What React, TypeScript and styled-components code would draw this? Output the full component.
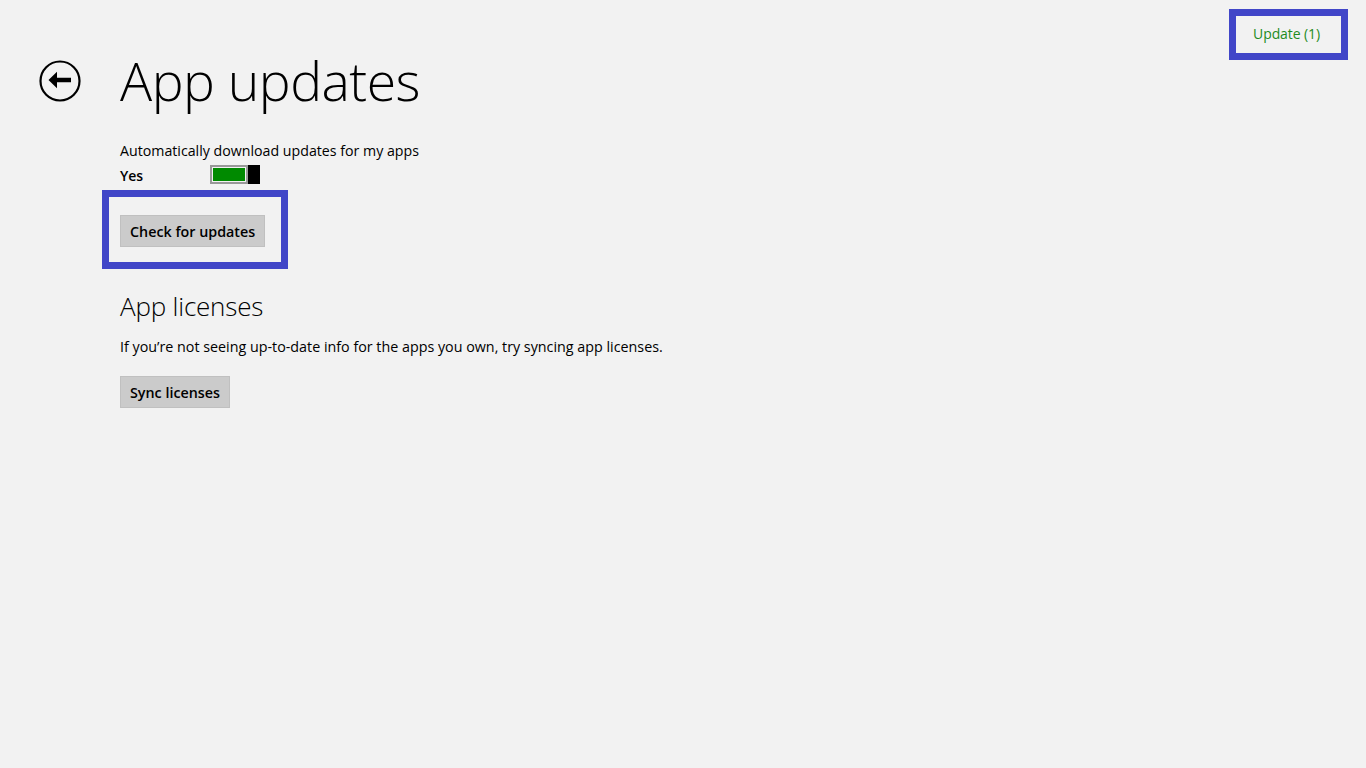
import React, { useState } from 'react';
import styled, { createGlobalStyle } from 'styled-components';

const GlobalStyle = createGlobalStyle`
  html, body {
    margin: 0;
    padding: 0;
    background: #f2f2f2;
  }
  body {
    font-family: 'Open Sans', 'Noto Sans', sans-serif;
    color: #000;
  }
`;

const Page = styled.div`
  position: relative;
  width: 1366px;
  height: 768px;
  background: #f2f2f2;
  overflow: hidden;
`;

const Header = styled.header`
  display: flex;
  align-items: center;
  padding: 47px 0 0 38px;
  height: 67px;
`;

const BackButton = styled.button`
  width: 44px;
  height: 44px;
  padding: 0;
  margin: 0;
  border: none;
  background: transparent;
  display: flex;
  align-items: center;
  justify-content: center;
  cursor: pointer;
`;

const Title = styled.h1`
  margin: 0 0 0 38px;
  font-size: 53.5px;
  font-weight: 300;
  letter-spacing: -0.5px;
  line-height: 67px;
`;

const Content = styled.main`
  padding: 27px 0 0 120px;
  display: flex;
  flex-direction: column;
  align-items: flex-start;
`;

const Label = styled.div`
  font-size: 14.2px;
  line-height: 20px;
`;

const ToggleRow = styled.div`
  display: flex;
  align-items: center;
  height: 28px;
`;

const ToggleState = styled.div`
  width: 90px;
  font-size: 14px;
  font-weight: 600;
`;

const ToggleTrack = styled.button<{ on: boolean }>`
  display: flex;
  width: 50px;
  height: 19px;
  margin-top: -2px;
  padding: 0;
  border: none;
  background: transparent;
  cursor: pointer;
`;

const ToggleFill = styled.span<{ on: boolean }>`
  flex: 1;
  border: 2px solid #999;
  box-shadow: inset 0 0 0 1px #f2f2f2;
  background: ${(p) => (p.on ? '#008a00' : '#f2f2f2')};
`;

const ToggleThumb = styled.span`
  width: 12px;
  background: #000;
`;

const Highlight = styled.div<{ pad: string }>`
  border: 7px solid #4146c8;
  padding: ${(p) => p.pad};
  box-sizing: border-box;
`;

const CheckBox = styled(Highlight)`
  margin: 1px 0 0 -18px;
`;

const Button = styled.button`
  font-family: 'Open Sans', 'Noto Sans', sans-serif;
  font-size: 14.3px;
  font-weight: 600;
  color: #000;
  background: #cbcbcb;
  border: 1px solid #c0c0c0;
  height: 32px;
  padding: 0 9px;
  cursor: pointer;
`;

const SectionTitle = styled.h2`
  margin: 20px 0 0;
  font-size: 26px;
  font-weight: 300;
  line-height: 34px;
  letter-spacing: -0.2px;
`;

const Paragraph = styled.p`
  margin: 14px 0 0;
  font-size: 14.3px;
  line-height: 20px;
`;

const SyncButton = styled(Button)`
  margin-top: 19px;
`;

const TopRight = styled(Highlight)`
  position: absolute;
  top: 9px;
  right: 18px;
  width: 119px;
  height: 51px;
  display: flex;
  align-items: center;
  justify-content: center;
`;

const UpdateLink = styled.button`
  font-family: 'Open Sans', 'Noto Sans', sans-serif;
  font-size: 14px;
  color: #1e8c1e;
  background: transparent;
  border: none;
  padding: 0 4px 2px 0;
  letter-spacing: -0.1px;
  cursor: pointer;
`;

const BackIcon = () => (
  <svg width="44" height="44" viewBox="0 0 44 44">
    <circle cx="22" cy="22" r="19.5" fill="none" stroke="#000" strokeWidth="2.2" />
    <path d="M10.5 21 L19 12.8 L19 18.7 L33 18.7 L33 23.3 L19 23.3 L19 29.2 Z" fill="#000" />
  </svg>
);

const App = () => {
  const [autoUpdate, setAutoUpdate] = useState(true);

  return (
    <Page>
      <GlobalStyle />
      <TopRight pad="0">
        <UpdateLink>Update (1)</UpdateLink>
      </TopRight>
      <Header>
        <BackButton aria-label="Back">
          <BackIcon />
        </BackButton>
        <Title>App updates</Title>
      </Header>
      <Content>
        <Label>Automatically download updates for my apps</Label>
        <ToggleRow>
          <ToggleState>{autoUpdate ? 'Yes' : 'No'}</ToggleState>
          <ToggleTrack on={autoUpdate} onClick={() => setAutoUpdate(!autoUpdate)}>
            <ToggleFill on={autoUpdate} />
            <ToggleThumb />
          </ToggleTrack>
        </ToggleRow>
        <CheckBox pad="18px 16px 15px 11px">
          <Button>Check for updates</Button>
        </CheckBox>
        <SectionTitle>App licenses</SectionTitle>
        <Paragraph>
          If you’re not seeing up-to-date info for the apps you own, try syncing app licenses.
        </Paragraph>
        <SyncButton>Sync licenses</SyncButton>
      </Content>
    </Page>
  );
};

export default App;
